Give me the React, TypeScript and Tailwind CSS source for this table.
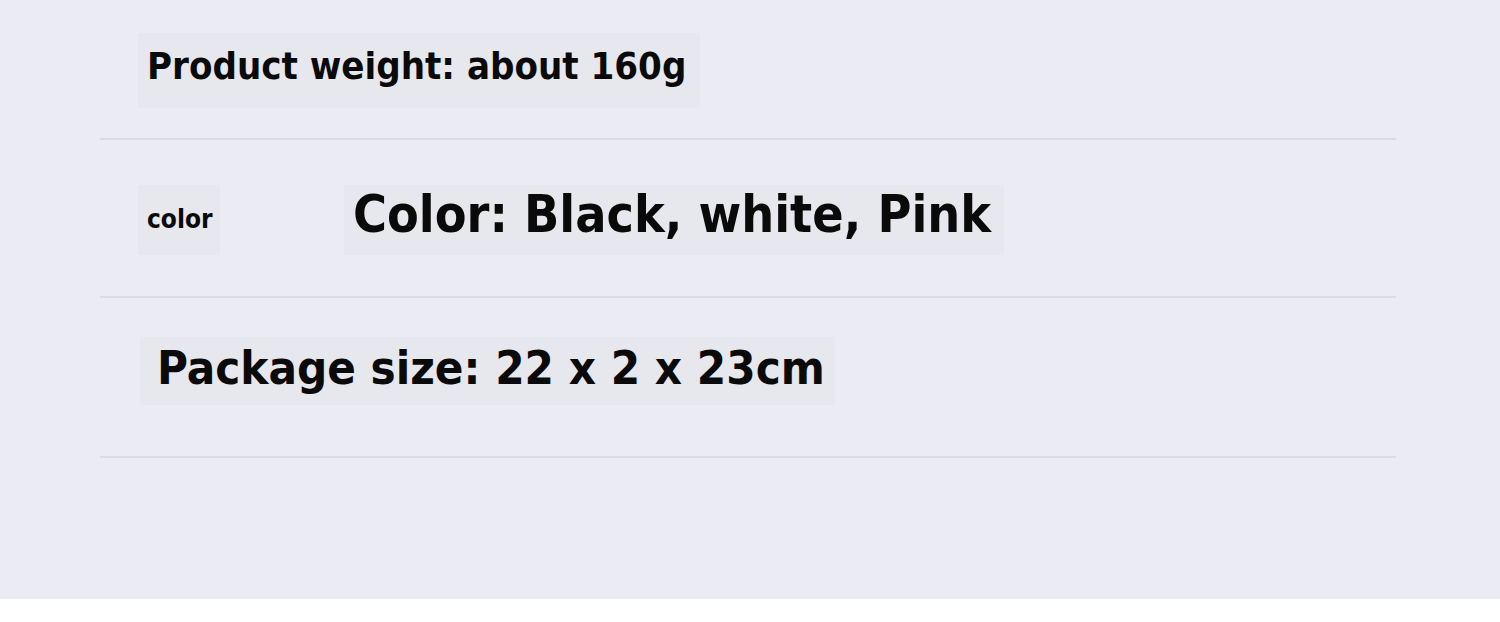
export default function App() {
  return (
    <div className="w-[1500px] h-[622px] bg-white font-['DejaVu_Sans_Condensed',sans-serif] font-bold text-[#0a0a0a]">
      <div className="h-[599px] bg-[#ebebf4] pl-[100px] pr-[104px] flex flex-col">
        {/* weight */}
        <div className="pt-[33px] pb-[30px] border-b-2 border-[#dadae3]">
          <div className="ml-[38px] w-[562px] h-[75px] bg-[#e7e7ee] pl-[9px] pb-[10px] flex items-center">
            <span className="text-[38px] leading-none whitespace-nowrap">Product weight: about 160g</span>
          </div>
        </div>

        {/* color */}
        <div className="pt-[45px] pb-[41px] border-b-2 border-[#dadae3] flex">
          <div className="ml-[38px] w-[82px] h-[70px] bg-[#e7e7ee] pl-[9px] pb-[2px] flex items-center">
            <span className="text-[26px] leading-none">color</span>
          </div>
          <div className="ml-[124px] w-[660px] h-[70px] bg-[#e7e7ee] pl-[9px] pb-[10px] flex items-center">
            <span className="text-[51.5px] leading-none whitespace-nowrap">Color: Black, white, Pink</span>
          </div>
        </div>

        {/* package */}
        <div className="pt-[39px] pb-[51px] border-b-2 border-[#dadae3]">
          <div className="ml-[40px] w-[695px] h-[68px] bg-[#e7e7ee] pl-[17px] pb-[7px] flex items-center">
            <span className="text-[47px] leading-none whitespace-nowrap">Package size: 22 x 2 x 23cm</span>
          </div>
        </div>
      </div>
    </div>
  )
}
